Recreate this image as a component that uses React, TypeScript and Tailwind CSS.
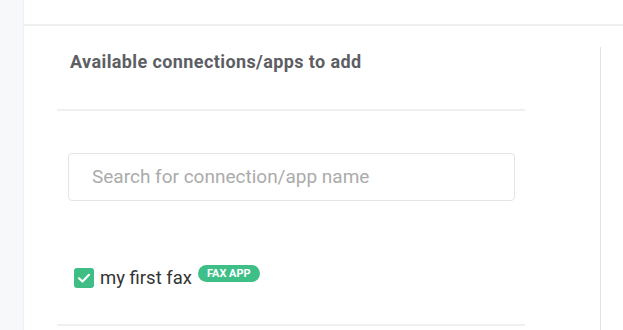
import React from "react";

export default function App() {
  return (
    <div className="flex h-[330px] w-[623px] overflow-hidden bg-white" style={{ fontFamily: "Roboto, 'Liberation Sans', sans-serif" }}>
      <div className="w-[24px] shrink-0 border-r border-[#eef0f3] bg-[#f7f8fa]" />
      <div className="flex min-w-0 flex-1 flex-col">
        <div className="h-[26px] shrink-0 border-b-2 border-[#f0f0f0]" />
        <div className="flex flex-1 pl-[33px] pt-[21px]">
          <div className="w-[544px] border-r border-[#e3e3e3]">
            <div className="w-[468px]">
              <div className="border-b-2 border-[#f0f0f0] pb-[35px] pl-[13px] pt-[3px]">
                <h2 className="text-[18px] font-bold leading-[24px] tracking-[0.4px] text-[#5d5e63]">Available connections/apps to add</h2>
              </div>
              <div className="ml-[11px] mt-[42px] flex h-[48px] w-[447px] items-center rounded-[4px] border border-[#e4e4e4] pl-[23px]">
                <input
                  className="w-full bg-transparent text-[19px] text-[#333] outline-none placeholder:text-[#ababab]"
                  placeholder="Search for connection/app name"
                />
              </div>
              <div className="ml-[17px] mt-[64px] flex items-start">
                <div className="mt-[3px] flex h-[20px] w-[20px] items-center justify-center rounded-[3px] bg-[#3ebd85]">
                  <svg width="14" height="14" viewBox="0 0 14 14" fill="none">
                    <path d="M2 7.3 L5.5 10.5 L12 3.8" stroke="white" strokeWidth="2.2" strokeLinecap="round" strokeLinejoin="round" />
                  </svg>
                </div>
                <span className="ml-[6px] text-[18.5px] leading-[26px] text-[#333]">my first fax</span>
                <span className="ml-[6px] flex h-[17px] items-center rounded-full bg-[#3ebf88] px-[9px] text-[11px] font-bold leading-none text-white">FAX APP</span>
              </div>
              <div className="mt-[33px] border-b-2 border-[#f0f0f0]" />
            </div>
          </div>
        </div>
      </div>
    </div>
  );
}
